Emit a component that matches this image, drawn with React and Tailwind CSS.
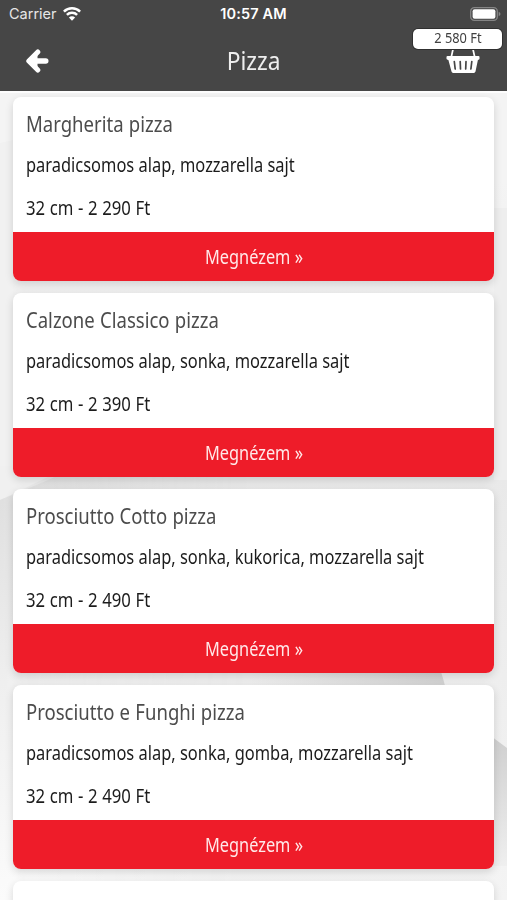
import React from 'react';

const pizzas = [
  { name: 'Margherita pizza', toppings: 'paradicsomos alap, mozzarella sajt', price: '32 cm - 2 290 Ft' },
  { name: 'Calzone Classico pizza', toppings: 'paradicsomos alap, sonka, mozzarella sajt', price: '32 cm - 2 390 Ft' },
  { name: 'Prosciutto Cotto pizza', toppings: 'paradicsomos alap, sonka, kukorica, mozzarella sajt', price: '32 cm - 2 490 Ft' },
  { name: 'Prosciutto e Funghi pizza', toppings: 'paradicsomos alap, sonka, gomba, mozzarella sajt', price: '32 cm - 2 490 Ft' },
];

// Soft grey waves behind the list
function Backdrop() {
  return (
    <svg className="absolute inset-0 h-full w-full" viewBox="0 0 507 900" preserveAspectRatio="none">
      <defs>
        <linearGradient id="base" x1="0" y1="0" x2="0" y2="1">
          <stop offset="0" stopColor="#f4f4f4" />
          <stop offset="0.2" stopColor="#f4f4f4" />
          <stop offset="0.53" stopColor="#e9e9e9" />
          <stop offset="0.75" stopColor="#eeeeee" />
          <stop offset="1" stopColor="#f4f4f4" />
        </linearGradient>
        <linearGradient id="left" x1="0" y1="0" x2="0" y2="1">
          <stop offset="0" stopColor="#dddddd" />
          <stop offset="0.5" stopColor="#efefef" />
          <stop offset="1" stopColor="#fbfbfb" />
        </linearGradient>
        <linearGradient id="fade" x1="0" y1="0" x2="1" y2="0">
          <stop offset="0" stopColor="white" />
          <stop offset="1" stopColor="black" />
        </linearGradient>
        <mask id="leftFade">
          <rect y="460" width="250" height="440" fill="url(#fade)" />
        </mask>
        <linearGradient id="right" x1="0" y1="0" x2="0" y2="1">
          <stop offset="0" stopColor="#cdcdcd" />
          <stop offset="1" stopColor="#efefef" />
        </linearGradient>
        <linearGradient id="edge" x1="0" y1="0" x2="1" y2="0">
          <stop offset="0" stopColor="#d2d2d2" stopOpacity="0" />
          <stop offset="1" stopColor="#d2d2d2" />
        </linearGradient>
      </defs>
      <rect width="507" height="900" fill="url(#base)" />
      <path d="M0 143 L13 140 V470 H0Z" fill="#f1f1f1" />
      <path d="M0 466 H70 Q30 486 0 500Z" fill="#f0f0f0" />
      <path d="M494 208 H507 V480 H494Z" fill="#eeeeee" />
      <path d="M0 500 Q40 484 80 466 H250 V900 H0Z" fill="url(#left)" mask="url(#leftFade)" />
      <path d="M250 660 H436 Q442 672 446 690 H250Z" fill="url(#edge)" />
      <path d="M480 728 L507 748 V866 H480Z" fill="url(#right)" />
    </svg>
  );
}

function WifiIcon() {
  return (
    <svg className="h-[14px] w-[18px]" viewBox="0 0 18 14" fill="none" stroke="white" strokeWidth="2.5">
      <path d="M.9 4.6a11.5 11.5 0 0 1 16.2 0" />
      <path d="M3.9 7.9a7.2 7.2 0 0 1 10.2 0" />
      <path d="M9 13.7 5.9 10.5a4.3 4.3 0 0 1 6.2 0Z" fill="white" stroke="none" />
    </svg>
  );
}

function BatteryIcon() {
  return (
    <svg className="h-[14px] w-[31px]" viewBox="0 0 31 14">
      <rect x="0.7" y="0.7" width="26.6" height="12.6" rx="3.6" fill="none" stroke="#858585" strokeWidth="1.3" />
      <rect x="2.6" y="2.2" width="22.8" height="9.6" rx="2" fill="white" />
      <path d="M28.7 4.7q1.8.7 1.8 2.3t-1.8 2.3Z" fill="#858585" />
    </svg>
  );
}

function BackIcon() {
  return (
    <svg className="h-6 w-6" viewBox="0 0 24 24" fill="none" stroke="white" strokeLinecap="round" strokeLinejoin="round">
      <path d="M12.8 3 3.8 12l9 9" strokeWidth="5" />
      <path d="M5 12h15.8" strokeWidth="5.4" />
      <path d="M4 12 12 5v14Z" fill="white" strokeWidth="1" />
    </svg>
  );
}

function BasketIcon() {
  return (
    <svg className="h-[28px] w-[34px]" viewBox="0 0 34 28">
      <path d="M7.3 1 5.4 9.5M26.7 1l1.9 8.5" stroke="white" strokeWidth="1.7" />
      <path d="M1.5 9h31q1 0 1 1v1.7q0 1-1.6 1.2L29.5 24.5q-.3 1.4-1.7 1.4H7.2q-1.4 0-1.7-1.4L2.4 13Q.5 12.8.5 11.7V10q0-1 1-1Z" fill="white" />
      <path d="M8.3 14.5l.9 7.5M14.2 14.5l.3 7.5M20 14.5l-.3 7.5M25.8 14.5l-.9 7.5" stroke="#464646" strokeWidth="1.7" strokeLinecap="round" />
    </svg>
  );
}

function PizzaCard({ pizza }) {
  return (
    <article className="h-[184px] shrink-0 overflow-hidden rounded-lg bg-white shadow-[0_3px_8px_rgba(0,0,0,0.14)]">
      <div className="flex h-[135.4px] flex-col items-start pl-[12.5px] pt-[11px] whitespace-nowrap">
        <h2 className="h-8 origin-left scale-x-[0.883] text-[21px] leading-8 text-[#4c4c4c] [word-spacing:0.5px]">{pizza.name}</h2>
        <p className="mt-[9px] h-8 origin-left scale-x-[0.865] text-[19px] leading-8 text-[#1c1c1c]">{pizza.toppings}</p>
        <p className="mt-[11px] h-8 origin-left scale-x-[0.88] text-[19px] leading-8 text-[#1c1c1c] [word-spacing:0.3px]">{pizza.price}</p>
      </div>
      <button className="flex h-[48.6px] w-full items-center justify-center bg-[#ee1c29] pt-[1.5px] text-[19px] text-[#ffe9e9]">
        <span className="scale-x-[0.86]">Megnézem »</span>
      </button>
    </article>
  );
}

function App() {
  return (
    <div className="relative flex h-[900px] w-[507px] flex-col overflow-hidden bg-[#f2f2f2] font-['Noto_Sans',sans-serif]">
      <Backdrop />
      <header className="relative h-[91px] shrink-0 bg-[#464646] text-white shadow-[0_2px_0_#fdfdfd]">
        {/* Status bar */}
        <div className="grid h-[27px] grid-cols-[1fr_auto_1fr] items-center pl-[9px] pr-[6px] font-['Inter',sans-serif] text-[14.5px]">
          <div className="flex items-center gap-1.5 text-[#e6e6e6]">
            <span>Carrier</span>
            <WifiIcon />
          </div>
          <span className="mr-[3px] text-[14.5px] font-semibold tracking-[0.15px]">10:57 AM</span>
          <div className="flex justify-end">
            <BatteryIcon />
          </div>
        </div>

        {/* Title bar */}
        <div className="grid h-16 grid-cols-3 items-start">
          <button className="ml-[25px] mt-[22px] w-6"><BackIcon /></button>
          <h1 className="mt-[15px] text-center text-[25px] leading-9 text-[#eeeeee]">
            <span className="inline-block scale-x-[0.91]">Pizza</span>
          </h1>
          <button className="relative mr-[27px] mt-5 justify-self-end">
            <BasketIcon />
            <span className="absolute -top-[18.5px] -left-[33px] flex h-[20px] w-[89px] items-center justify-center rounded-[5px] bg-white text-[13.5px] whitespace-nowrap text-[#404040] shadow-[0_0_0_1px_#303030]">
              <span className="scale-x-[0.95]">2 580 Ft</span>
            </span>
          </button>
        </div>
      </header>

      <main className="relative flex flex-col gap-3 px-[13px] pt-1.5">
        {pizzas.map((pizza) => (
          <PizzaCard key={pizza.name} pizza={pizza} />
        ))}
        <div className="h-[184px] shrink-0 rounded-lg bg-white shadow-[0_3px_8px_rgba(0,0,0,0.14)]" />
      </main>
    </div>
  );
}

export default App;
